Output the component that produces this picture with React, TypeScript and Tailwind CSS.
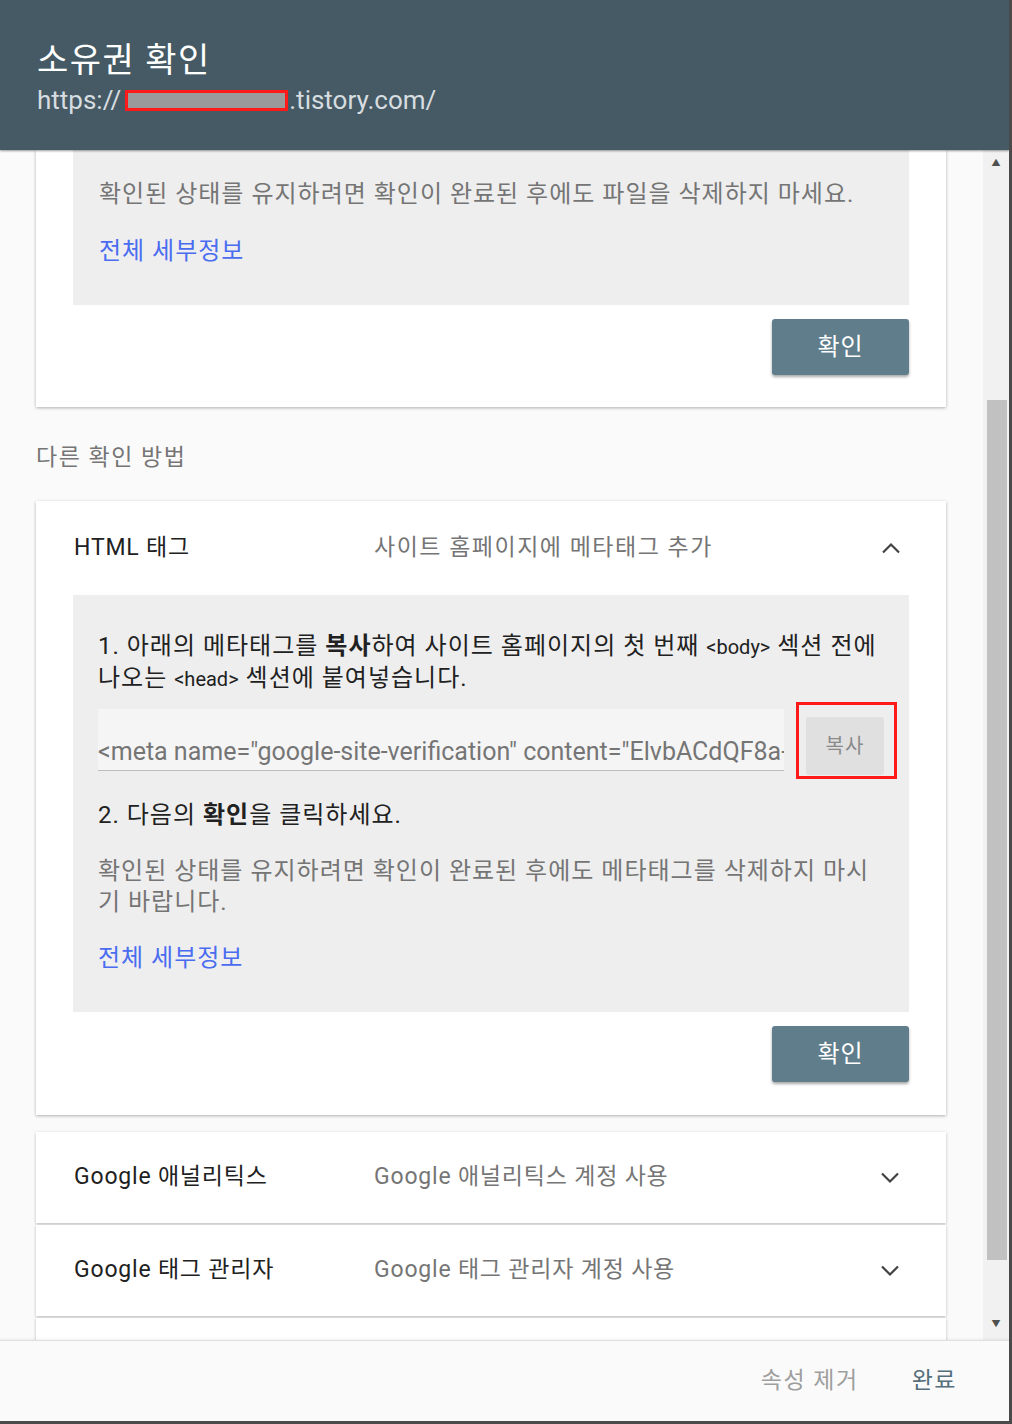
function ChevronUp() {
  return (
    <svg width="20" height="12" viewBox="0 0 20 12" fill="none" className="stroke-[#424242]">
      <path d="M2 10.5L10 2.5l8 8" strokeWidth="2.2" />
    </svg>
  );
}

function ChevronDown() {
  return (
    <svg width="20" height="12" viewBox="0 0 20 12" fill="none" className="stroke-[#424242]">
      <path d="M2 1.5l8 8 8-8" strokeWidth="2.2" />
    </svg>
  );
}

function VerifyButton() {
  return (
    <div className="flex justify-end">
      <button className="w-[137px] h-[56px] rounded-[3px] bg-[#607d8b] text-white text-[24px] tracking-[1px] shadow-[0_2px_3px_rgba(0,0,0,0.35)]">
        확인
      </button>
    </div>
  );
}

function MethodRow({ title, desc }: { title?: string; desc?: string }) {
  return (
    <div className="h-[91px] shrink-0 bg-white shadow-[0_1px_3px_rgba(0,0,0,0.25)] flex items-center pl-[38px] pr-[46px]">
      <span className="w-[300px] text-[23px] tracking-[0.8px] text-[#212121]">{title}</span>
      <span className="flex-1 text-[23px] tracking-[0.8px] text-[#757575]">{desc}</span>
      {title && <ChevronDown />}
    </div>
  );
}

export default function App() {
  return (
    <div className="w-[1012px] h-[1424px] flex flex-col overflow-hidden border-r-[3px] border-b-[3px] border-[#4a4a4a] bg-[#fafafa] font-['Roboto','Noto_Sans_CJK_KR',sans-serif]">
      <header className="h-[150px] shrink-0 bg-[#455a64] pl-[37px] pt-[38px] shadow-[0_1px_2px_rgba(0,0,0,0.4)] z-10">
        <h1 className="text-[34px] tracking-[1.5px] leading-[44px] text-white">소유권 확인</h1>
        <div className="mt-[2px] flex items-center text-[26px] leading-[32px] text-[#d7dde0]">
          <span>https://</span>
          <span className="ml-[4px] inline-block w-[163px] h-[21px] border-[3px] border-[#ff1a1a] bg-[#9a9a9a]" />
          <span className="ml-[1px]">.tistory.com/</span>
        </div>
      </header>

      <div className="flex flex-1 min-h-0">
        <main className="flex-1 overflow-hidden pl-[36px] pr-[37px]">
          {/* first card, scrolled past its top */}
          <section className="bg-white shadow-[0_1px_3px_rgba(0,0,0,0.3)] px-[37px] pb-[32px]">
            <div className="bg-[#eeeeee] px-[26px] pt-[28px] pb-[38px]">
              <p className="text-[24px] tracking-[1px] leading-[32px] text-[#757575]">
                확인된 상태를 유지하려면 확인이 완료된 후에도 파일을 삭제하지 마세요.
              </p>
              <a className="mt-[25px] block text-[24px] tracking-[1px] leading-[32px] text-[#4a6cf0]">전체 세부정보</a>
            </div>
            <div className="mt-[14px]">
              <VerifyButton />
            </div>
          </section>

          <h2 className="mt-[36px] text-[23px] tracking-[1.5px] leading-[30px] text-[#757575]">다른 확인 방법</h2>

          <section className="mt-[28px] bg-white shadow-[0_1px_3px_rgba(0,0,0,0.3)] px-[37px] pb-[33px]">
            <div className="h-[94px] flex items-center pl-[1px] pr-[8px]">
              <span className="w-[300px] text-[23px] tracking-[0.8px] text-[#212121]">HTML 태그</span>
              <span className="flex-1 text-[23px] tracking-[1.5px] text-[#757575]">사이트 홈페이지에 메타태그 추가</span>
              <ChevronUp />
            </div>
            <div className="bg-[#eeeeee] pl-[25px] pr-[11px] pt-[36px] pb-[38px]">
              <p className="pr-[14px] text-[24px] tracking-[1px] leading-[31px] text-[#212121]">
                1. 아래의 메타태그를 <b className="font-bold">복사</b>하여 사이트 홈페이지의 첫 번째{" "}
                <span className="text-[20px] tracking-normal">&lt;body&gt;</span> 섹션 전에 나오는{" "}
                <span className="text-[20px] tracking-normal">&lt;head&gt;</span> 섹션에 붙여넣습니다.
              </p>
              <div className="mt-[7px] flex items-start">
                <div className="mt-[7px] w-[686px] h-[62px] bg-[#f5f5f5] border-b border-[#bdbdbd] flex items-end pb-[3px]">
                  <span className="block w-full overflow-hidden whitespace-nowrap text-[25px] leading-[30px] text-[#757575]">
                    &lt;meta name="google-site-verification" content="ElvbACdQF8a-xxxxxxxx" /&gt;
                  </span>
                </div>
                <div className="ml-[12px] w-[101px] h-[77px] border-[3px] border-[#ff1a1a] pl-[7px] pt-[12px]">
                  <button className="w-[78px] h-[58px] rounded-[3px] bg-[#e0e0e0] text-[20px] tracking-[1px] text-[#8a8a8a]">복사</button>
                </div>
              </div>
              <p className="mt-[21px] text-[24px] tracking-[1px] leading-[31px] text-[#212121]">
                2. 다음의 <b className="font-bold">확인</b>을 클릭하세요.
              </p>
              <p className="mt-[25px] pr-[14px] text-[24px] tracking-[1px] leading-[31px] text-[#757575]">
                확인된 상태를 유지하려면 확인이 완료된 후에도 메타태그를 삭제하지 마시기 바랍니다.
              </p>
              <a className="mt-[25px] block text-[24px] tracking-[1px] leading-[31px] text-[#4a6cf0]">전체 세부정보</a>
            </div>
            <div className="mt-[14px]">
              <VerifyButton />
            </div>
          </section>

          <div className="mt-[17px] flex flex-col gap-[2px]">
            <MethodRow title="Google 애널리틱스" desc="Google 애널리틱스 계정 사용" />
            <MethodRow title="Google 태그 관리자" desc="Google 태그 관리자 계정 사용" />
            <MethodRow />
          </div>
        </main>

        {/* scrollbar */}
        <div className="w-[26px] shrink-0 bg-[#f1f1f1] flex flex-col items-center">
          <div className="h-[28px] flex items-center justify-center text-[9px] text-[#505050]">▲</div>
          <div className="mt-[222px] ml-[2px] w-[20px] h-[860px] bg-[#c1c1c1]" />
          <div className="mt-auto h-[30px] flex items-center justify-center text-[9px] text-[#505050]">▼</div>
        </div>
      </div>

      <footer className="h-[81px] shrink-0 border-t border-[#e0e0e0] bg-[#fafafa] flex items-center justify-end gap-[53px] pr-[52px] shadow-[0_-1px_2px_rgba(0,0,0,0.06)] z-10">
        <span className="text-[23px] tracking-[1.5px] text-[#9e9e9e]">속성 제거</span>
        <span className="text-[23px] tracking-[1.5px] text-[#546e7a]">완료</span>
      </footer>
    </div>
  );
}
